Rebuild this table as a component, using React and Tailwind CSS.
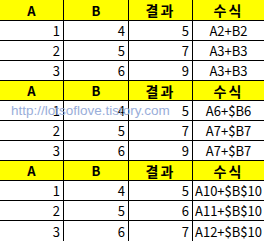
const blocks = [
  [
    [1, 4, 5, "A2+B2"],
    [2, 5, 7, "A3+B3"],
    [3, 6, 9, "A3+B3"],
  ],
  [
    [1, 4, 5, "A6+$B6"],
    [2, 5, 7, "A7+$B7"],
    [3, 6, 9, "A7+$B7"],
  ],
  [
    [1, 4, 5, "A10+$B$10"],
    [2, 5, 6, "A11+$B$10"],
    [3, 6, 7, "A12+$B$10"],
  ],
]

const row = "grid grid-cols-[64px_65px_64px_71px] h-[20px] border-t border-black"

function Header({ first }) {
  return (
    <div className={first ? "grid grid-cols-[64px_65px_64px_71px] h-[20px] bg-[#ffff00]" : row + " bg-[#ffff00]"}>
      <div className="border-r border-black flex items-center justify-center font-bold text-[13px]">A</div>
      <div className="border-r border-black flex items-center justify-center font-bold text-[13px]">B</div>
      <div className="border-r border-black flex items-center justify-center font-bold text-[14px] tracking-[2px]">결과</div>
      <div className="flex items-center justify-center font-bold text-[14px] tracking-[2px]">수식</div>
    </div>
  )
}

function Row({ r, last }) {
  return (
    <div className={last ? row + " h-[21px]" : row}>
      <div className="border-r border-black flex items-center justify-end pr-[3px]">{r[0]}</div>
      <div className="border-r border-black flex items-center justify-end pr-[3px]">{r[1]}</div>
      <div className="border-r border-black flex items-center justify-end pr-[3px]">{r[2]}</div>
      <div className="flex items-center justify-center overflow-hidden whitespace-nowrap">{r[3]}</div>
    </div>
  )
}

export default function App() {
  return (
    <div className="relative w-[264px] h-[241px] bg-white text-black text-[13px] leading-none overflow-hidden font-['Noto_Sans_CJK_KR','Noto_Sans',sans-serif]">
      {blocks.map((b, bi) => (
        <div key={bi}>
          <Header first={bi === 0} />
          {b.map((r, i) => (
            <Row key={i} r={r} last={bi === 2 && i === 2} />
          ))}
        </div>
      ))}
      {/* blog watermark */}
      <div className="absolute left-[11px] top-[104px] text-[13.5px] leading-none text-[#8fa6d6] opacity-90 font-['Liberation_Sans',Arial,sans-serif]">
        http://lotsoflove.tistory.com
      </div>
    </div>
  )
}
